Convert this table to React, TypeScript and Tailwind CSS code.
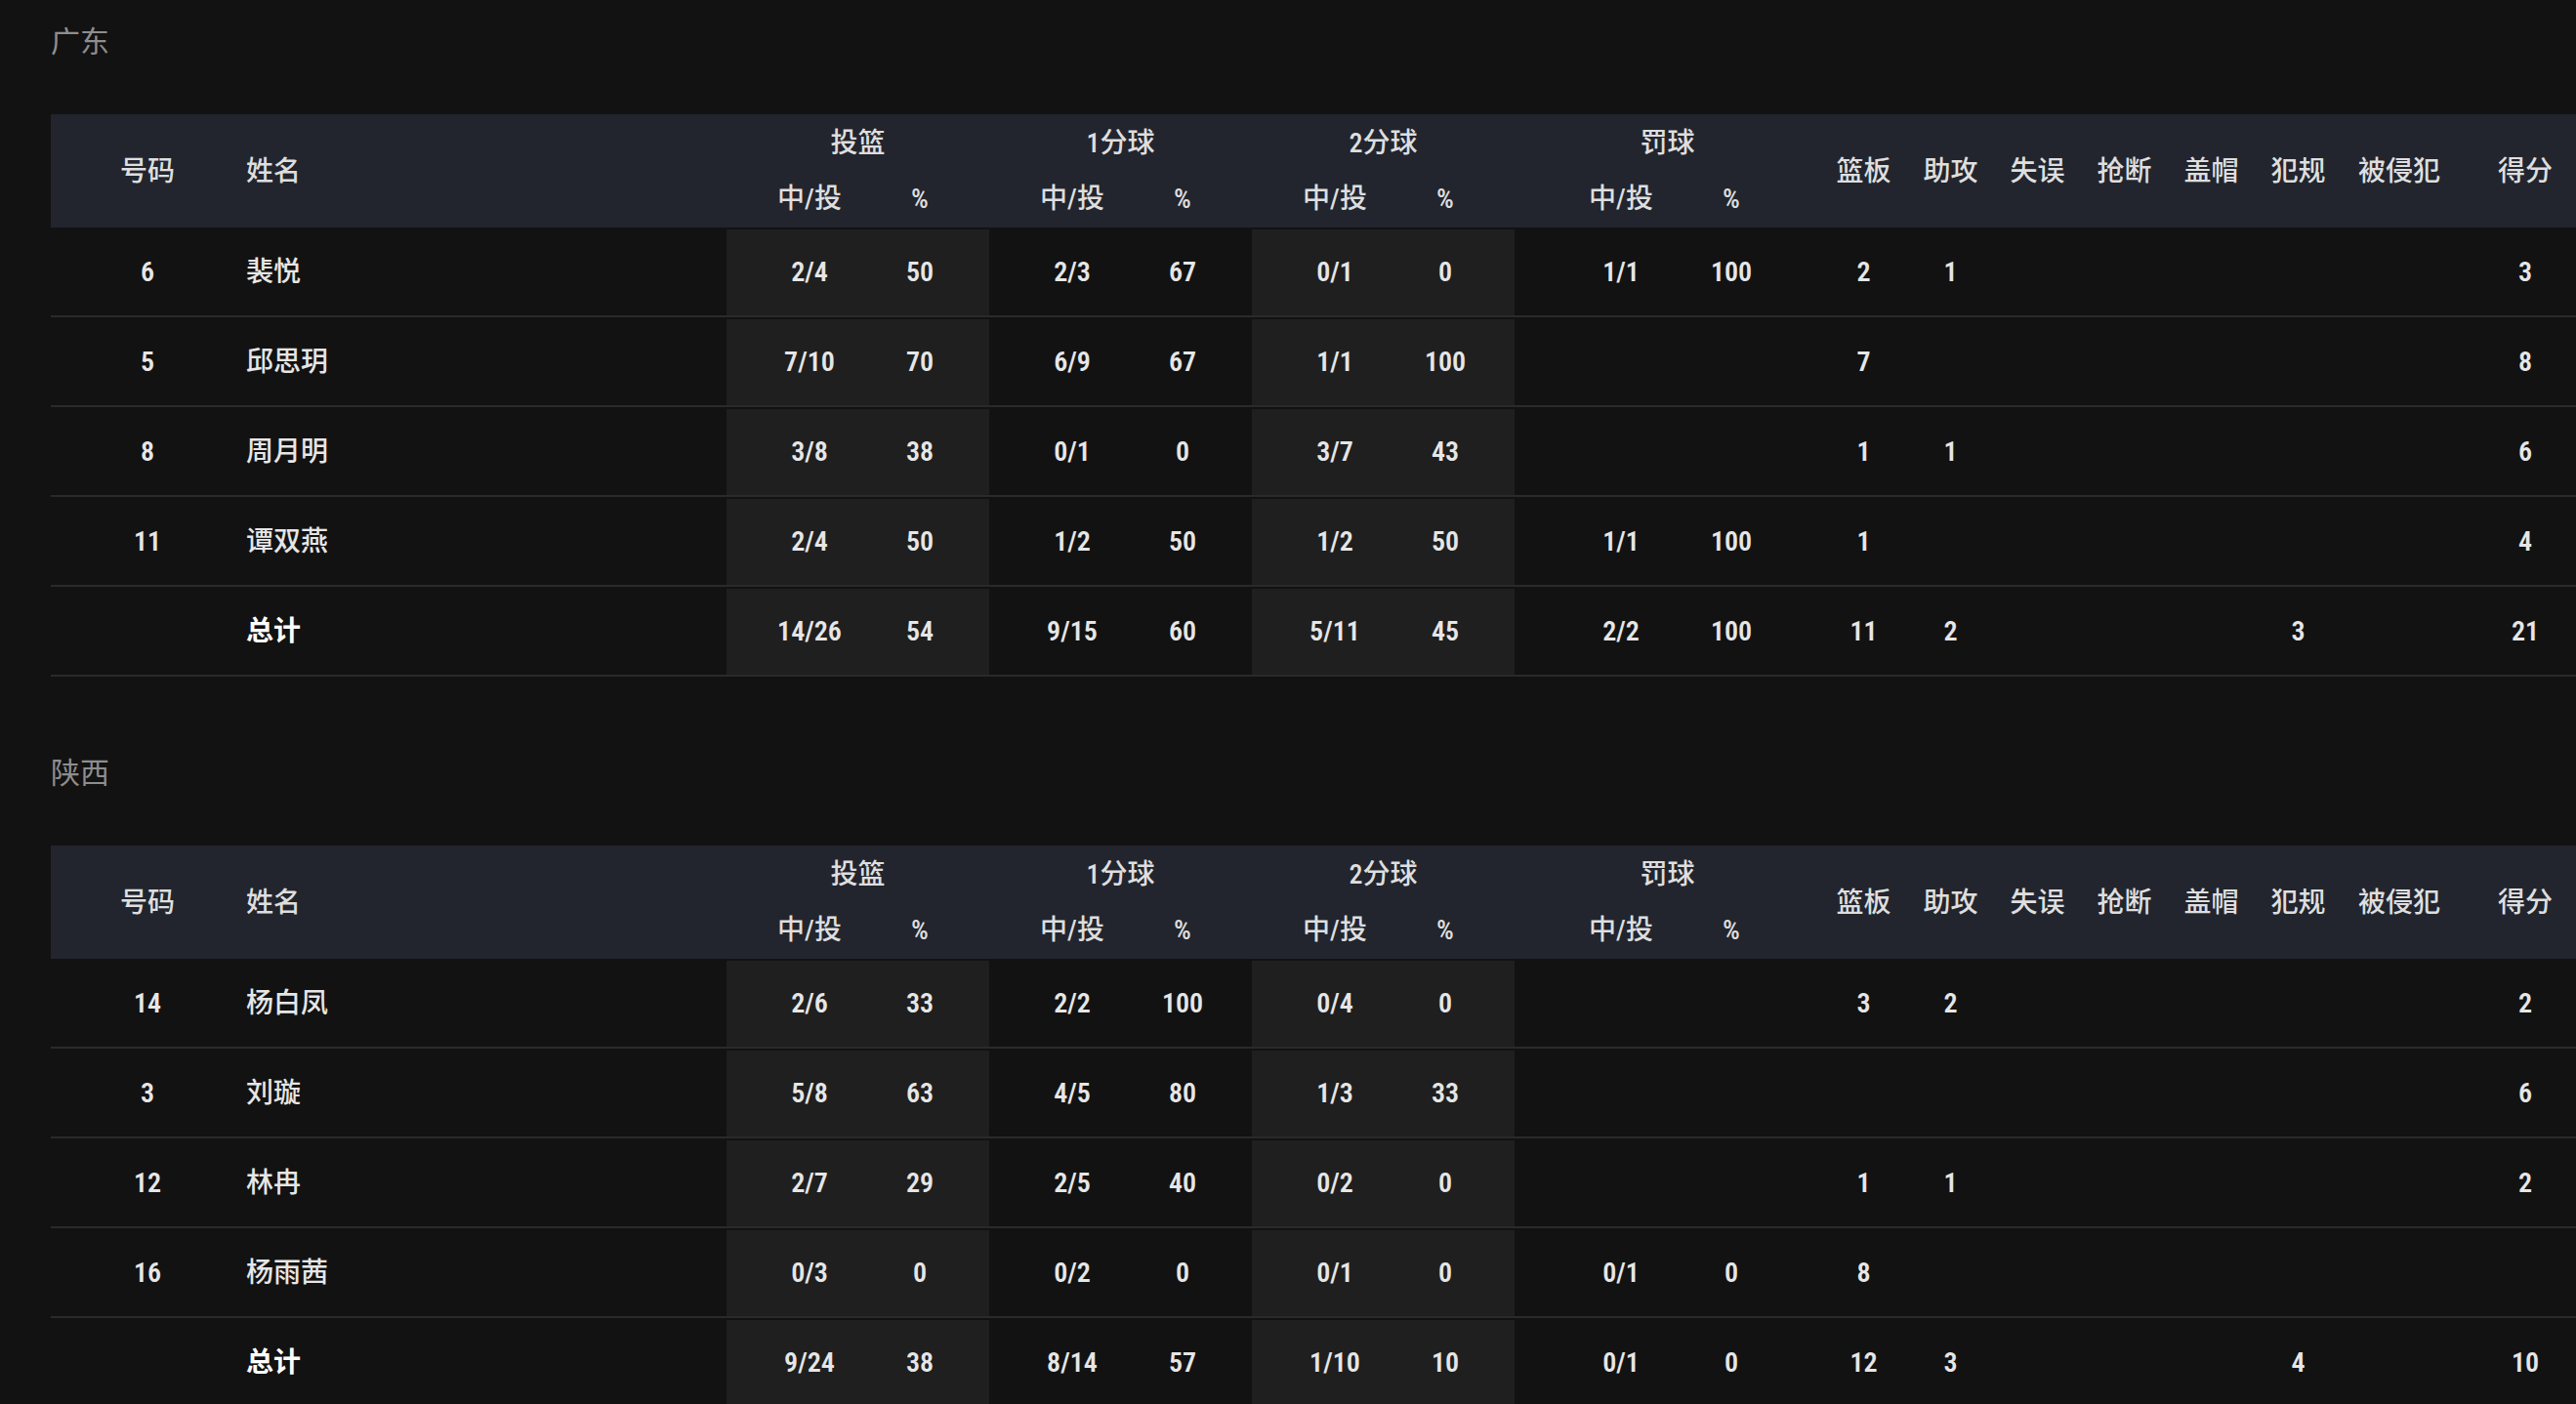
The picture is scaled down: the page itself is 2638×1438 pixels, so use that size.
import React from "react";

type Row = {
  no: string;
  name: string;
  fg: [string, string];
  p1: [string, string];
  p2: [string, string];
  ft: [string, string];
  stats: string[]; // 篮板 助攻 失误 抢断 盖帽 犯规 被侵犯
  pts: string;
  total?: boolean;
};

const FONT = {
  fontFamily:
    '"Liberation Sans Narrow", "Roboto Condensed", "DejaVu Sans Condensed", "Noto Sans CJK SC", sans-serif',
};

const gd: Row[] = [
  { no: "6", name: "裴悦", fg: ["2/4", "50"], p1: ["2/3", "67"], p2: ["0/1", "0"], ft: ["1/1", "100"], stats: ["2", "1", "", "", "", "", ""], pts: "3" },
  { no: "5", name: "邱思玥", fg: ["7/10", "70"], p1: ["6/9", "67"], p2: ["1/1", "100"], ft: ["", ""], stats: ["7", "", "", "", "", "", ""], pts: "8" },
  { no: "8", name: "周月明", fg: ["3/8", "38"], p1: ["0/1", "0"], p2: ["3/7", "43"], ft: ["", ""], stats: ["1", "1", "", "", "", "", ""], pts: "6" },
  { no: "11", name: "谭双燕", fg: ["2/4", "50"], p1: ["1/2", "50"], p2: ["1/2", "50"], ft: ["1/1", "100"], stats: ["1", "", "", "", "", "", ""], pts: "4" },
  { no: "", name: "总计", fg: ["14/26", "54"], p1: ["9/15", "60"], p2: ["5/11", "45"], ft: ["2/2", "100"], stats: ["11", "2", "", "", "", "3", ""], pts: "21", total: true },
];

const sx: Row[] = [
  { no: "14", name: "杨白凤", fg: ["2/6", "33"], p1: ["2/2", "100"], p2: ["0/4", "0"], ft: ["", ""], stats: ["3", "2", "", "", "", "", ""], pts: "2" },
  { no: "3", name: "刘璇", fg: ["5/8", "63"], p1: ["4/5", "80"], p2: ["1/3", "33"], ft: ["", ""], stats: ["", "", "", "", "", "", ""], pts: "6" },
  { no: "12", name: "林冉", fg: ["2/7", "29"], p1: ["2/5", "40"], p2: ["0/2", "0"], ft: ["", ""], stats: ["1", "1", "", "", "", "", ""], pts: "2" },
  { no: "16", name: "杨雨茜", fg: ["0/3", "0"], p1: ["0/2", "0"], p2: ["0/1", "0"], ft: ["0/1", "0"], stats: ["8", "", "", "", "", "", ""], pts: "" },
  { no: "", name: "总计", fg: ["9/24", "38"], p1: ["8/14", "57"], p2: ["1/10", "10"], ft: ["0/1", "0"], stats: ["12", "3", "", "", "", "4", ""], pts: "10", total: true },
];

const statLabels = ["篮板", "助攻", "失误", "抢断", "盖帽", "犯规"];

function Pair({ v, light, ft }: { v: [string, string]; light?: boolean; ft?: boolean }) {
  return (
    <div className={`flex h-full items-center ${ft ? "w-[313px] pl-[24px]" : "w-[269px]"} ${light ? "bg-[#1f1f1f]" : ""}`}>
      <div className="w-[170px] text-center">{v[0]}</div>
      <div className="w-[56px] text-center">{v[1]}</div>
    </div>
  );
}

function GroupHead({ title, ft }: { title: string; ft?: boolean }) {
  return (
    <div className={`flex h-full flex-col ${ft ? "w-[313px]" : "w-[269px]"}`}>
      <div className="flex h-[58px] items-center justify-center">{title}</div>
      <div className={`flex h-[58px] items-center ${ft ? "pl-[24px]" : ""}`}>
        <div className="w-[170px] text-center">中/投</div>
        <div className="w-[56px] text-center">%</div>
      </div>
    </div>
  );
}

function Table({ rows }: { rows: Row[] }) {
  return (
    <div className="w-[2586px]">
      <div className="flex h-[116px] items-center bg-[#22252e] pt-[1px] text-[28px] font-medium text-[#dedede]">
        <div className="w-[198px] text-center">号码</div>
        <div className="w-[494px] pl-[2px]">姓名</div>
        <GroupHead title="投篮" />
        <GroupHead title="1分球" />
        <GroupHead title="2分球" />
        <GroupHead title="罚球" ft />
        {statLabels.map((s) => (
          <div key={s} className="w-[89px] text-center">
            {s}
          </div>
        ))}
        <div className="w-[118px] text-center">被侵犯</div>
        <div className="w-[18px]" />
        <div className="w-[104px] text-center">得分</div>
      </div>
      {rows.map((r, i) => (
        <div
          key={i}
          className="flex h-[92px] items-stretch border-b-2 border-[#2a2a2a] pt-[2px] text-[28px] font-semibold text-[#e6e6e6]"
        >
          <div className="flex w-[198px] items-center justify-center">{r.no}</div>
          <div className={`flex w-[494px] items-center pl-[2px] ${r.total ? "font-bold text-white" : "font-medium"}`}>
            {r.name}
          </div>
          <Pair v={r.fg} light />
          <Pair v={r.p1} />
          <Pair v={r.p2} light />
          <Pair v={r.ft} ft />
          {r.stats.slice(0, 6).map((s, j) => (
            <div key={j} className="flex w-[89px] items-center justify-center">
              {s}
            </div>
          ))}
          <div className="flex w-[118px] items-center justify-center">{r.stats[6]}</div>
          <div className="w-[18px]" />
          <div className="flex w-[104px] items-center justify-center">{r.pts}</div>
        </div>
      ))}
    </div>
  );
}

export default function App() {
  return (
    <div className="min-h-screen w-full overflow-hidden bg-[#121212] pl-[52px]" style={FONT}>
      <div className="pt-[27px] text-[30px] leading-[32px] text-[#8e8e8e]">广东</div>
      <div className="mt-[58px]">
        <Table rows={gd} />
      </div>
      <div className="mt-[83px] text-[30px] leading-[32px] text-[#8e8e8e]">陕西</div>
      <div className="mt-[58px]">
        <Table rows={sx} />
      </div>
    </div>
  );
}
